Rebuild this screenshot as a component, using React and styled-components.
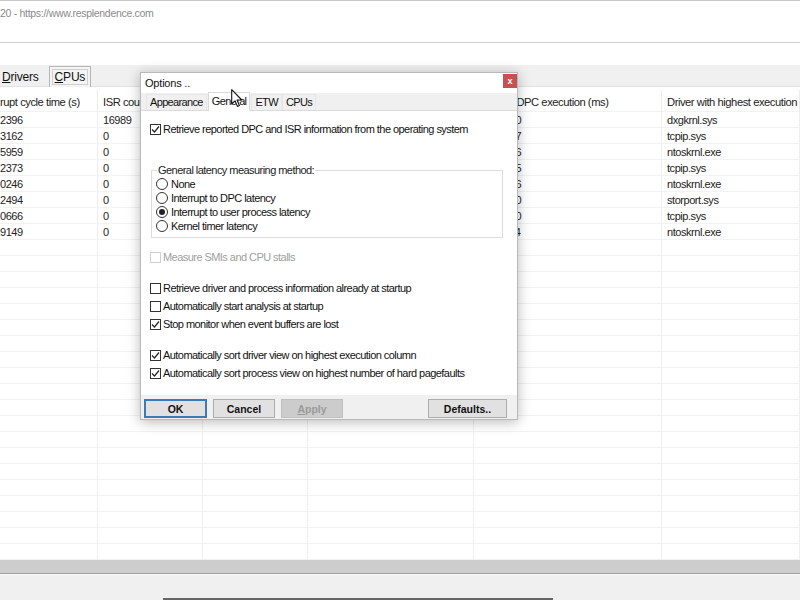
import React from "react";
import styled, { createGlobalStyle } from "styled-components";

const Global = createGlobalStyle`
  html, body { margin: 0; padding: 0; background: #fff; overflow: hidden; }
  body { font-family: "Liberation Sans", Arial, sans-serif; }
  * { box-sizing: border-box; }
`;

const Screen = styled.div`
  position: relative;
  width: 800px;
  height: 600px;
  display: flex;
  flex-direction: column;
  background: #fff;
  overflow: hidden;
`;

const TitleArea = styled.div`
  height: 43px;
  border-top: 1px solid #c8c8c8;
  border-bottom: 1px solid #cfcfcf;
  padding-top: 6px;
  font-size: 10.5px;
  color: #8a8a8a;
  letter-spacing: -0.3px;
`;

const Gap = styled.div`
  height: ${(p) => p.h}px;
  background: ${(p) => p.bg || "#fff"};
`;

const TabStrip = styled.div`
  height: 22px;
  background: #f0f0f0;
  display: flex;
  align-items: flex-end;
  gap: 10px;
  border-bottom: 1px solid #e2e2e2;
`;

const MainTab = styled.div`
  font-size: 12px;
  letter-spacing: -0.2px;
  height: ${(p) => (p.active ? 21 : 18)}px;
  padding: ${(p) => (p.active ? "2px 2px 0" : "2px 0 0 2px")};
  color: #111;
  ${(p) =>
    p.active
      ? `border: 1px solid #b5b5b5; border-bottom: none; background: #f4f4f4; margin-bottom: -1px; `
      : ``}
  u { text-decoration: underline; }
`;

const FocusBox = styled.span`
  display: inline-block;
  padding: 0 2px;
  border: 1px solid #d0d0d0;
  line-height: 14px;
`;

const Table = styled.div`
  display: grid;
  grid-template-columns: 98px 105px 105px 166px 188px 138px;
  grid-template-rows: 22px;
  grid-auto-rows: 16px;
  flex: 1;
  align-content: start;
  font-size: 11px;
  letter-spacing: -0.45px;
  color: #222;
  overflow: hidden;
`;

const HeadCell = styled.div`
  padding: 6px 0 0 ${(p) => (p.first ? 0 : 5)}px;
  border-right: 1px solid #ececec;
  border-bottom: 1px solid #f2f2f2;
  white-space: nowrap;
  overflow: hidden;
  font-size: 11.2px;
`;

const Cell = styled.div`
  padding: 2px 0 0 ${(p) => (p.first ? 0 : 5)}px;
  border-right: 1px solid #efefef;
  border-bottom: 1px solid #f2f2f2;
  white-space: nowrap;
  overflow: hidden;
`;

const ScrollBar = styled.div`
  height: 14px;
  background: #cdcdcd;
  border-bottom: 1px solid #9f9f9f;
`;

const StatusBar = styled.div`
  height: 26px;
  background: #f0f0f0;
  border-top: 1px solid #fafafa;
  display: flex;
  align-items: flex-end;
`;

const TaskStrip = styled.div`
  height: 2px;
  width: 390px;
  margin-left: 163px;
  background: #666;
`;

/* ---------- dialog ---------- */

const Dialog = styled.div`
  position: absolute;
  left: 140px;
  top: 72px;
  width: 378px;
  height: 348px;
  background: #fff;
  border: 1px solid #b9b9b9;
  box-shadow: 0 2px 12px rgba(0, 0, 0, 0.28);
  display: flex;
  flex-direction: column;
  font-size: 11px;
  color: #111;
  letter-spacing: -0.55px;
`;

const DlgTitle = styled.div`
  height: 20px;
  display: flex;
  align-items: center;
  justify-content: space-between;
  padding: 0 0 0 4px;
  background: #fff;
  letter-spacing: -0.2px;
`;

const CloseBtn = styled.div`
  width: 14px;
  height: 14px;
  align-self: flex-start;
  margin-top: 1px;
  background: #c75050;
  color: #fff;
  font-size: 9px;
  font-weight: bold;
  display: flex;
  align-items: center;
  justify-content: center;
  letter-spacing: 0;
`;

const DlgTabs = styled.div`
  height: 18px;
  background: #f0f0f0;
  display: flex;
  align-items: flex-end;
  padding-left: 5px;
  border-bottom: 1px solid #dadada;
`;

const DlgTab = styled.div`
  height: ${(p) => (p.active ? 19 : 16)}px;
  padding: ${(p) => (p.active ? "2px 3px 0" : "1px 3px 0")};
  background: ${(p) => (p.active ? "#fff" : "#f0f0f0")};
  border: 1px solid ${(p) => (p.active ? "#dadada" : "#e6e6e6")};
  border-bottom: none;
  margin-bottom: ${(p) => (p.active ? -1 : 0)}px;
  margin-left: ${(p) => (p.active ? 1 : 0)}px;
  margin-right: ${(p) => (p.active ? 1 : 0)}px;
  font-size: 11px;
  letter-spacing: -0.65px;
  z-index: ${(p) => (p.active ? 1 : 0)};
`;

const Panel = styled.div`
  flex: 1;
  padding: 9px 15px 0 9px;
  display: flex;
  flex-direction: column;
  background: #fff;
`;

const CheckRow = styled.div`
  height: 18px;
  display: flex;
  align-items: center;
  gap: 2px;
  margin-top: ${(p) => p.mt || 0}px;
  color: ${(p) => (p.disabled ? "#a0a0a0" : "#111")};
  white-space: nowrap;
`;

const Box = styled.span`
  width: 11px;
  height: 11px;
  border: 1px solid ${(p) => (p.disabled ? "#cfcfcf" : "#333")};
  background: #fff;
  display: inline-flex;
  align-items: center;
  justify-content: center;
  flex: none;
`;

const Group = styled.fieldset`
  margin: 26px 0 0 1px;
  padding: 1px 4px 4px 4px;
  border: 1px solid #dcdcdc;
  width: 352px;
`;

const Legend = styled.legend`
  padding: 0 1px;
  margin-left: 1px;
  font-size: 11px;
  line-height: 12px;
  color: #222;
`;

const RadioRow = styled.div`
  height: 14px;
  display: flex;
  align-items: center;
  gap: 3px;
  white-space: nowrap;
`;

const Radio = styled.span`
  width: 12px;
  height: 12px;
  border-radius: 50%;
  border: 1px solid #333;
  background: #fff;
  display: inline-flex;
  align-items: center;
  justify-content: center;
  flex: none;
  &::after {
    content: "";
    width: 6px;
    height: 6px;
    border-radius: 50%;
    background: ${(p) => (p.checked ? "#222" : "transparent")};
  }
`;

const ButtonBar = styled.div`
  height: 24px;
  background: #f0f0f0;
  display: flex;
  align-items: flex-start;
  padding: 4px 0 0 3px;
  gap: 6px;
`;

const Btn = styled.div`
  width: ${(p) => p.w}px;
  height: 19px;
  margin-left: ${(p) => p.ml || 0}px;
  background: ${(p) => (p.disabled ? "#cccccc" : "#e1e1e1")};
  border: ${(p) =>
    p.focus ? "2px solid #3b7ab8" : p.disabled ? "1px solid #bfbfbf" : "1px solid #adadad"};
  color: ${(p) => (p.disabled ? "#9a9a9a" : "#111")};
  font-size: 10.5px;
  font-weight: bold;
  display: flex;
  align-items: center;
  justify-content: center;
  letter-spacing: 0;
  u { text-decoration: underline; }
`;

const Cursor = styled.svg`
  position: absolute;
  left: 231px;
  top: 89px;
  width: 12px;
  height: 19px;
  z-index: 10;
`;

const Check = () => (
  <svg width="9" height="9" viewBox="0 0 9 9">
    <path d="M1 4.5 L3.5 7 L8 1.5" fill="none" stroke="#222" strokeWidth="1.2" />
  </svg>
);

const CB = ({ checked, disabled, mt, children }) => (
  <CheckRow mt={mt} disabled={disabled}>
    <Box disabled={disabled}>{checked && <Check />}</Box>
    {children}
  </CheckRow>
);

const cols = [
  "rupt cycle time (s)",
  "ISR count",
  "ISR exec",
  "Highest ISR execution",
  "Highest DPC execution (ms)",
  "Driver with highest execution",
];

const rows = [
  ["2396", "16989", "", "", "0.410130", "dxgkrnl.sys"],
  ["3162", "0", "", "", "0.214247", "tcpip.sys"],
  ["5959", "0", "", "", "0.186256", "ntoskrnl.exe"],
  ["2373", "0", "", "", "0.172015", "tcpip.sys"],
  ["0246", "0", "", "", "0.142536", "ntoskrnl.exe"],
  ["2494", "0", "", "", "0.137510", "storport.sys"],
  ["0666", "0", "", "", "0.125600", "tcpip.sys"],
  ["9149", "0", "", "", "0.118614", "ntoskrnl.exe"],
];

const TOTAL_ROWS = 28;

export default function App() {
  const body = [];
  for (let r = 0; r < TOTAL_ROWS; r++) {
    const data = rows[r] || ["", "", "", "", "", ""];
    data.forEach((v, c) => {
      body.push(
        <Cell key={`${r}-${c}`} first={c === 0}>
          {v}
        </Cell>
      );
    });
  }
  return (
    <>
      <Global />
      <Screen>
        <TitleArea>20 - https://www.resplendence.com</TitleArea>
        <Gap h={22} />
        <TabStrip>
          <MainTab>
            <u>D</u>rivers
          </MainTab>
          <MainTab active>
            <FocusBox>
              <u>C</u>PUs
            </FocusBox>
          </MainTab>
        </TabStrip>
        <Gap h={3} />
        <Table>
          {cols.map((c, i) => (
            <HeadCell key={c} first={i === 0}>
              {c}
            </HeadCell>
          ))}
          {body}
        </Table>
        <ScrollBar />
        <StatusBar>
          <TaskStrip />
        </StatusBar>

        <Dialog>
          <DlgTitle>
            <span>Options ..</span>
            <CloseBtn>x</CloseBtn>
          </DlgTitle>
          <DlgTabs>
            <DlgTab>Appearance</DlgTab>
            <DlgTab active>General</DlgTab>
            <DlgTab>ETW</DlgTab>
            <DlgTab>CPUs</DlgTab>
          </DlgTabs>
          <Panel>
            <CB checked>Retrieve reported DPC and ISR information from the operating system</CB>
            <Group>
              <Legend>General latency measuring method:</Legend>
              <RadioRow>
                <Radio />
                None
              </RadioRow>
              <RadioRow>
                <Radio />
                Interrupt to DPC latency
              </RadioRow>
              <RadioRow>
                <Radio checked />
                Interrupt to user process latency
              </RadioRow>
              <RadioRow>
                <Radio />
                Kernel timer latency
              </RadioRow>
            </Group>
            <CB disabled mt={10}>
              Measure SMIs and CPU stalls
            </CB>
            <CB mt={13}>Retrieve driver and process information already at startup</CB>
            <CB>Automatically start analysis at startup</CB>
            <CB checked>Stop monitor when event buffers are lost</CB>
            <CB checked mt={13}>
              Automatically sort driver view on highest execution column
            </CB>
            <CB checked>Automatically sort process view on highest number of hard pagefaults</CB>
          </Panel>
          <ButtonBar>
            <Btn w={63} focus>
              OK
            </Btn>
            <Btn w={62}>Cancel</Btn>
            <Btn w={62} disabled>
              <u>A</u>pply
            </Btn>
            <Btn w={79} ml={79}>
              Defaults..
            </Btn>
          </ButtonBar>
        </Dialog>

        <Cursor width="12" height="19" viewBox="0 0 12 19">
          <path
            d="M0.7 0.7 L0.7 15 L4 11.8 L6.4 17.4 L8.4 16.6 L6.1 11 L10.8 11 Z"
            fill="#fff"
            stroke="#111"
            strokeWidth="1.1"
            strokeLinejoin="round"
          />
        </Cursor>
      </Screen>
    </>
  );
}
